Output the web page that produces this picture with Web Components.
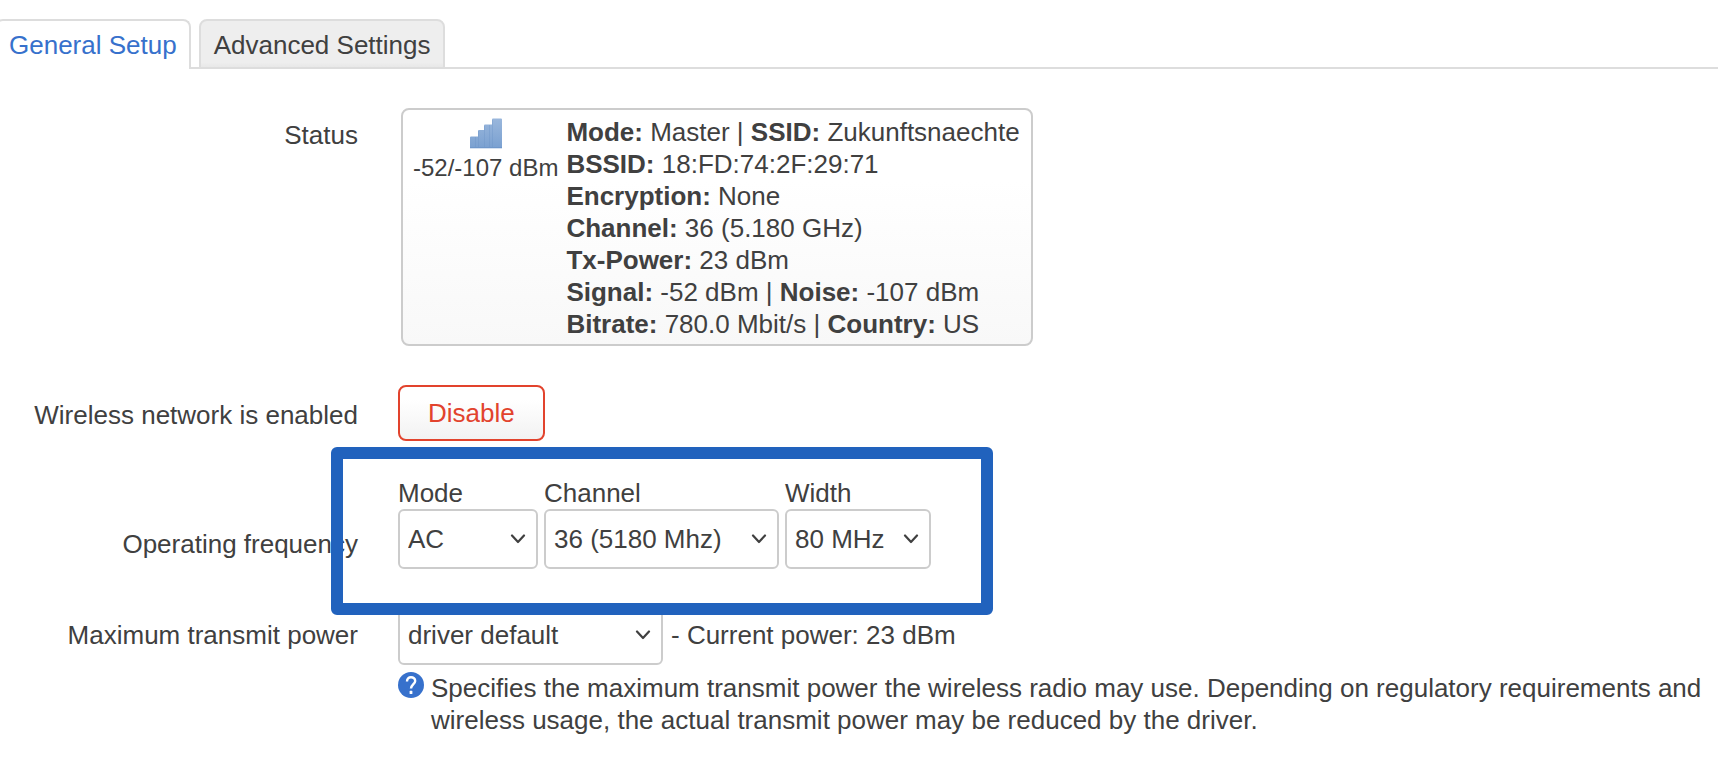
<!DOCTYPE html>
<html lang="en">
<head>
<meta charset="utf-8">
<title>Wireless device configuration</title>
<style>
  body {
    margin: 0;
    background: #fff;
    color: #404040;
    font: 26px/32px "Liberation Sans", Arial, Helvetica, sans-serif;
    overflow-x: hidden;
  }
</style>
</head>
<body>

<tab-bar>
  <tab-item active><a href="#general">General Setup</a></tab-item>
  <tab-item><a href="#advanced">Advanced Settings</a></tab-item>
</tab-bar>

<config-form>
  <config-row variant="status">
    <span slot="title">Status</span>
    <wifi-status level="-52/-107 dBm">
      <div><b>Mode:</b> Master | <b>SSID:</b> Zukunftsnaechte</div>
      <div><b>BSSID:</b> 18:FD:74:2F:29:71</div>
      <div><b>Encryption:</b> None</div>
      <div><b>Channel:</b> 36 (5.180 GHz)</div>
      <div><b>Tx-Power:</b> 23 dBm</div>
      <div><b>Signal:</b> -52 dBm | <b>Noise:</b> -107 dBm</div>
      <div><b>Bitrate:</b> 780.0 Mbit/s | <b>Country:</b> US</div>
    </wifi-status>
  </config-row>

  <config-row>
    <span slot="title">Wireless network is enabled</span>
    <danger-button>Disable</danger-button>
  </config-row>

  <config-row variant="stacked">
    <span slot="title">Operating frequency</span>
    <choice-box size="140">
      <label slot="label" for="mode">Mode</label>
      <select id="mode"><option>AC</option><option>N</option><option>Legacy</option></select>
    </choice-box>
    <choice-box size="235">
      <label slot="label" for="channel">Channel</label>
      <select id="channel"><option>36 (5180 Mhz)</option><option>40 (5200 Mhz)</option></select>
    </choice-box>
    <choice-box size="146">
      <label slot="label" for="width">Width</label>
      <select id="width"><option>80 MHz</option><option>40 MHz</option><option>20 MHz</option></select>
    </choice-box>
    <focus-frame slot="overlay"></focus-frame>
  </config-row>

  <config-row variant="inline">
    <label slot="title" for="txpower">Maximum transmit power</label>
    <choice-box size="265">
      <select id="txpower"><option>driver default</option><option>23 dBm</option></select>
    </choice-box>
    <span>- Current power: 23 dBm</span>
    <help-note slot="help">Specifies the maximum transmit power the wireless radio may use. Depending on regulatory requirements and wireless usage, the actual transmit power may be reduced by the driver.</help-note>
  </config-row>
</config-form>

<script>
  const define = (name, markup, setup) => {
    const template = document.createElement("template");
    template.innerHTML = markup;
    customElements.define(name, class extends HTMLElement {
      constructor() {
        super();
        this.attachShadow({ mode: "open" }).append(template.content.cloneNode(true));
      }
      connectedCallback() {
        if (setup) setup(this, this.shadowRoot);
      }
    });
  };

  define("tab-bar", `
    <style>
      :host { display: block; padding-top: 19px; }
      nav { display: flex; gap: 8px; margin-left: -5px; }
      nav::after { content: ""; flex: 1; margin-left: -8px; border-bottom: 2px solid #ddd; }
      ::slotted(*) { flex: none; }
    </style>
    <nav><slot></slot></nav>`);

  define("tab-item", `
    <style>
      :host {
        display: block;
        position: relative;
        box-sizing: border-box;
        height: 50px;
        padding: 8px 13px;
        border: 2px solid #ddd;
        border-radius: 8px 8px 0 0;
        background: linear-gradient(#eee 90%, #e8e8e8);
      }
      :host([active]) { padding: 8px 12px; background: #fff; border-bottom-color: #fff; }
      :host([active])::after {
        content: "";
        position: absolute;
        left: 100%;
        bottom: -2px;
        width: 10px;
        border-bottom: 2px solid #ddd;
      }
      ::slotted(a) { color: #404040; text-decoration: none; }
      :host([active]) ::slotted(a) { color: #3771cc; }
    </style>
    <slot></slot>`);

  define("config-form", `
    <style>
      :host { display: flex; flex-direction: column; gap: 36px; padding-top: 39px; }
    </style>
    <slot></slot>`);

  define("config-row", `
    <style>
      :host {
        display: grid;
        grid-template-columns: 358px minmax(0, 1fr);
        column-gap: 40px;
        position: relative;
      }
      .title { text-align: right; padding-top: 14px; }
      .fields { display: flex; align-items: center; gap: 6px; }
      .help { grid-column: 2; }
      :host([variant="status"]) { margin-bottom: 3px; }
      :host([variant="status"]) .title { padding-top: 11px; }
      :host([variant="status"]) .fields { padding-left: 3px; }
      :host([variant="stacked"]) .title { padding-top: 51px; }
      :host([variant="inline"]) .fields { gap: 8px; }
    </style>
    <div class="title"><slot name="title"></slot></div>
    <div class="fields"><slot></slot></div>
    <div class="help"><slot name="help"></slot></div>
    <slot name="overlay"></slot>`);

  define("wifi-status", `
    <style>
      :host {
        display: flex;
        gap: 8px;
        padding: 6px 11px 4px 10px;
        border: 2px solid #ccc;
        border-radius: 8px;
        background: linear-gradient(#fff 30%, #f8f8f8);
        white-space: nowrap;
      }
      .signal { display: flex; flex-direction: column; align-items: center; gap: 2px; font-size: 24px; }
      svg { display: block; width: 32px; height: 32px; margin-top: 2px; }
    </style>
    <div class="signal">
      <svg viewBox="0 0 32 32" aria-hidden="true">
        <defs>
          <linearGradient id="bar" x1="0" y1="0" x2="0" y2="32" gradientUnits="userSpaceOnUse">
            <stop offset="0" stop-color="#9ab7dc"/>
            <stop offset="1" stop-color="#789fd0"/>
          </linearGradient>
        </defs>
        <path d="M0 19.500Q0 18.500 1 18.500H8V13Q8 12 9 12H14V7.500Q14 6.500 15 6.500H22V1.500Q22 .5 23 .5H31Q32 .5 32 1.500V30H0Z" fill="url(#bar)"/>
        <path d="M8.500 13V30M14.500 8V30M22.500 2V30M5.500 19V30M19.500 7V30" stroke="#6a91c5" stroke-opacity=".35" fill="none"/>
        <path d="M0 29.500H32" stroke="#6f97ca"/>
        <path d="M0 30.500H32" stroke="#b9cde8" stroke-opacity=".6"/>
      </svg>
      <span></span>
    </div>
    <div><slot></slot></div>`,
    (host, root) => { root.querySelector("span").textContent = host.getAttribute("level"); });

  define("danger-button", `
    <style>
      :host { display: block; }
      button {
        display: block;
        height: 56px;
        padding: 0 28px;
        border: 2px solid #e2432d;
        border-radius: 8px;
        background: linear-gradient(#fff 25%, #f2f2f2);
        color: #e2432d;
        font: inherit;
        cursor: pointer;
      }
    </style>
    <button type="button"><slot></slot></button>`);

  define("choice-box", `
    <style>
      :host { display: block; flex: none; width: var(--size); }
      .control { display: grid; align-items: center; }
      ::slotted(select) {
        grid-area: 1 / 1;
        appearance: none;
        box-sizing: border-box;
        width: 100%;
        height: 60px;
        margin: 0;
        padding: 0 36px 0 8px;
        border: 2px solid #ccc;
        border-radius: 6px;
        background: #fff;
        color: #404040;
        font: inherit;
      }
      ::slotted(label) { display: block; }
      svg {
        grid-area: 1 / 1;
        justify-self: end;
        z-index: 1;
        width: 16px;
        height: 10px;
        margin-right: 12px;
        pointer-events: none;
      }
    </style>
    <slot name="label"></slot>
    <div class="control">
      <slot></slot>
      <svg viewBox="0 0 16 10" aria-hidden="true">
        <path d="M2 1.500L8 8L14 1.500" fill="none" stroke="#404040" stroke-width="2.200" stroke-linecap="round" stroke-linejoin="round"/>
      </svg>
    </div>`,
    host => host.style.setProperty("--size", host.getAttribute("size") + "px"));

  define("focus-frame", `
    <style>
      :host {
        position: absolute;
        z-index: 2;
        left: 331px;
        top: -30px;
        bottom: -46px;
        width: 662px;
        box-sizing: border-box;
        border: 12px solid #2162bd;
        border-radius: 6px;
        pointer-events: none;
      }
    </style>`);

  define("help-note", `
    <style>
      :host { display: flex; align-items: flex-start; gap: 7px; padding: 7px 8px 0 0; }
      svg { flex: none; width: 26px; height: 26px; }
    </style>
    <svg viewBox="0 0 26 26" aria-hidden="true">
      <circle cx="13" cy="13" r="13" fill="#3771cc"/>
      <path d="M9 9.500C9 6.700 10.700 5.200 13 5.200S17.200 6.700 17.200 8.900C17.200 11.900 13 12.400 13 16.600" fill="none" stroke="#fff" stroke-width="2.400"/>
      <rect x="11.600" y="18.800" width="2.800" height="3.200" rx=".6" fill="#fff"/>
    </svg>
    <span><slot></slot></span>`);
</script>
</body>
</html>
